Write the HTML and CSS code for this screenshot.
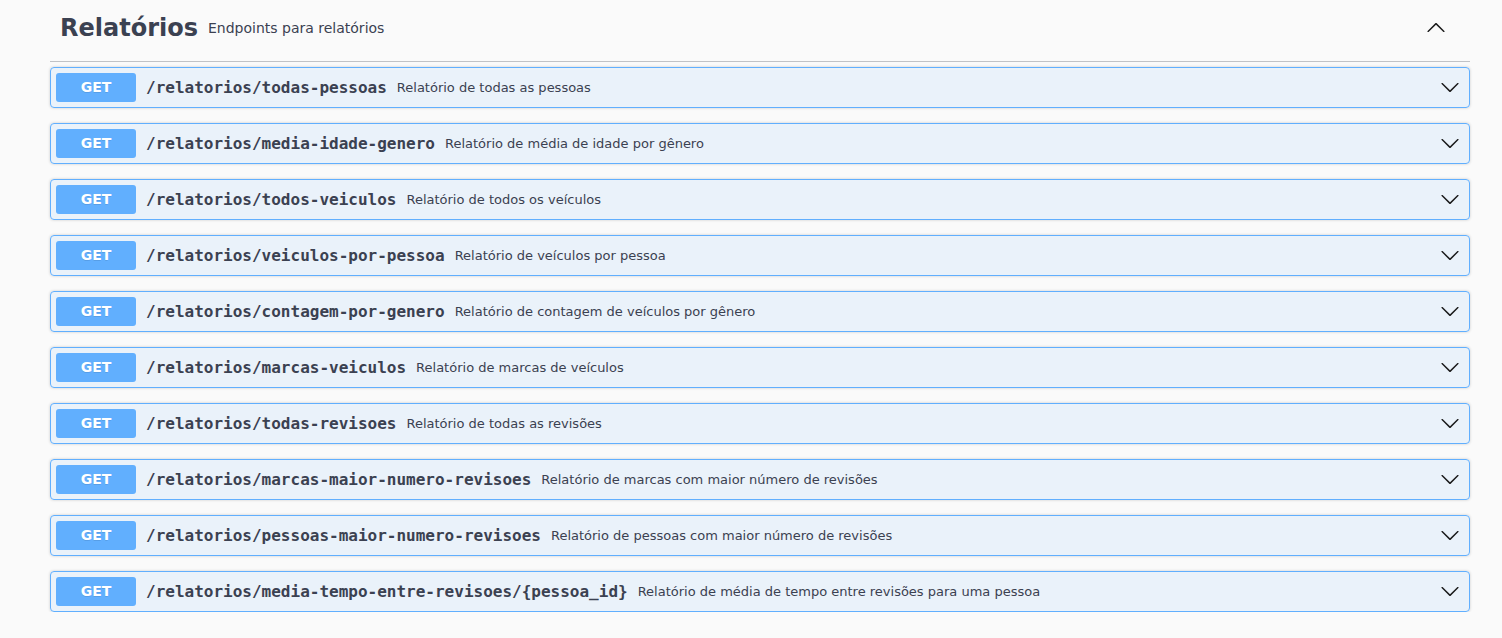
FILE: index.html
```html
<!DOCTYPE html>
<html lang="pt">
<head>
<meta charset="utf-8">
<title>Relatórios</title>
<link rel="stylesheet" href="styles.css">
</head>
<body>
<svg width="0" height="0" class="defs" aria-hidden="true">
  <symbol viewBox="0 0 20 20" id="arrow-up"><path d="M17.418 14.908c.272.268.709.268.979 0s.271-.701 0-.969l-7.908-7.83c-.27-.268-.707-.268-.979 0l-7.908 7.83c-.27.268-.27.701 0 .969.271.268.709.268.979 0L10 7.75l7.418 7.158z"/></symbol>
  <symbol viewBox="0 0 20 20" id="arrow-down"><path d="M17.418 6.109c.272-.268.709-.268.979 0s.271.701 0 .969l-7.908 7.83c-.27.268-.707.268-.979 0l-7.908-7.83c-.27-.268-.27-.701 0-.969.271-.268.709-.268.979 0L10 13.25l7.418-7.141z"/></symbol>
</svg>
<div class="wrapper">
  <section class="tag-section">
    <div class="tag">
      <h3 class="tag-title">Relatórios</h3>
      <small class="tag-desc">Endpoints para relatórios</small>
      <svg class="tag-arrow" width="20" height="20"><use href="#arrow-up"/></svg>
    </div>
    <div class="ops">
      <div class="op"><span class="method">GET</span><span class="path">/relatorios/todas-pessoas</span><span class="desc">Relatório de todas as pessoas</span><svg class="arrow" width="20" height="20"><use href="#arrow-down"/></svg></div>
      <div class="op"><span class="method">GET</span><span class="path">/relatorios/media-idade-genero</span><span class="desc">Relatório de média de idade por gênero</span><svg class="arrow" width="20" height="20"><use href="#arrow-down"/></svg></div>
      <div class="op"><span class="method">GET</span><span class="path">/relatorios/todos-veiculos</span><span class="desc">Relatório de todos os veículos</span><svg class="arrow" width="20" height="20"><use href="#arrow-down"/></svg></div>
      <div class="op"><span class="method">GET</span><span class="path">/relatorios/veiculos-por-pessoa</span><span class="desc">Relatório de veículos por pessoa</span><svg class="arrow" width="20" height="20"><use href="#arrow-down"/></svg></div>
      <div class="op"><span class="method">GET</span><span class="path">/relatorios/contagem-por-genero</span><span class="desc">Relatório de contagem de veículos por gênero</span><svg class="arrow" width="20" height="20"><use href="#arrow-down"/></svg></div>
      <div class="op"><span class="method">GET</span><span class="path">/relatorios/marcas-veiculos</span><span class="desc">Relatório de marcas de veículos</span><svg class="arrow" width="20" height="20"><use href="#arrow-down"/></svg></div>
      <div class="op"><span class="method">GET</span><span class="path">/relatorios/todas-revisoes</span><span class="desc">Relatório de todas as revisões</span><svg class="arrow" width="20" height="20"><use href="#arrow-down"/></svg></div>
      <div class="op"><span class="method">GET</span><span class="path">/relatorios/marcas-maior-numero-revisoes</span><span class="desc">Relatório de marcas com maior número de revisões</span><svg class="arrow" width="20" height="20"><use href="#arrow-down"/></svg></div>
      <div class="op"><span class="method">GET</span><span class="path">/relatorios/pessoas-maior-numero-revisoes</span><span class="desc">Relatório de pessoas com maior número de revisões</span><svg class="arrow" width="20" height="20"><use href="#arrow-down"/></svg></div>
      <div class="op"><span class="method">GET</span><span class="path">/relatorios/media-tempo-entre-revisoes/{pessoa_id}</span><span class="desc">Relatório de média de tempo entre revisões para uma pessoa</span><svg class="arrow" width="20" height="20"><use href="#arrow-down"/></svg></div>
    </div>
  </section>
</div>
</body>
</html>
```
FILE: styles.css
```css
html, body {
  margin: 0;
  padding: 0;
  background: #fafafa;
  font-family: "DejaVu Sans", sans-serif;
  color: #3b4151;
}
.defs {
  position: absolute;
  width: 0;
  height: 0;
}
.wrapper {
  padding-left: 50px;
  width: 1420px;
}
.tag {
  display: flex;
  align-items: center;
  padding: 14px 24px 19px 10px;
  border-bottom: 1px solid rgba(59, 65, 81, 0.3);
  margin-bottom: 5px;
}
.tag-title {
  margin: 0;
  font-size: 24px;
  line-height: 28px;
  font-weight: bold;
  color: #3b4151;
}
.tag-desc {
  flex: 1;
  padding: 0 10px;
  font-size: 14px;
  color: #3b4151;
}
.tag-arrow {
  fill: #1a1a1a;
  position: relative;
  top: -1px;
}
.ops {
  display: flex;
  flex-direction: column;
  gap: 15px;
}
.op {
  display: flex;
  align-items: center;
  padding: 5px;
  border: 1px solid #61affe;
  border-radius: 4px;
  background: rgba(97, 175, 254, 0.1);
  box-shadow: 0 0 3px rgba(0, 0, 0, 0.19);
}
.method {
  min-width: 80px;
  box-sizing: border-box;
  padding: 6px 0;
  line-height: 17px;
  font-size: 14px;
  font-weight: bold;
  text-align: center;
  color: #fff;
  background: #61affe;
  border-radius: 3px;
  text-shadow: 0 1px 0 rgba(0, 0, 0, 0.1);
}
.path {
  padding: 0 10px;
  font-family: "DejaVu Sans Mono", monospace;
  font-size: 16px;
  font-weight: bold;
  color: #3b4151;
}
.desc {
  flex: 1;
  font-size: 13px;
  color: #3b4151;
}
.arrow {
  fill: #1a1a1a;
  margin-right: 4px;
  position: relative;
  top: -1px;
}
```
